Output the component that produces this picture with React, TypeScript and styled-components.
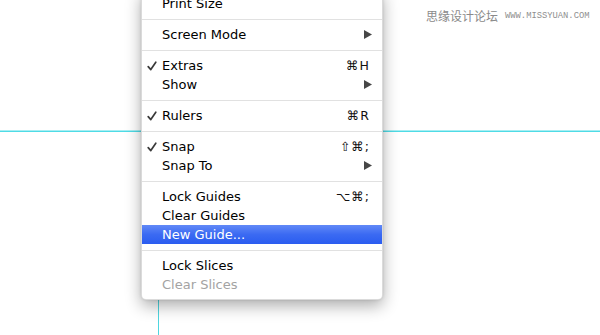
import React from "react";
import styled, { createGlobalStyle } from "styled-components";

const Global = createGlobalStyle`
  html, body { margin: 0; padding: 0; background: #fff; }
  body { font-family: "DejaVu Sans", "Noto Sans", sans-serif; }
`;

const Canvas = styled.div`
  position: relative;
  width: 600px;
  height: 335px;
  overflow: hidden;
  background: #fff;
`;

const HGuide = styled.div`
  position: absolute;
  left: 0;
  right: 0;
  top: 130px;
  height: 2px;
  background: linear-gradient(to bottom, #a8eef2 0%, #a8eef2 50%, #4fdbe6 50%, #4fdbe6 100%);
`;

const VGuide = styled.div`
  position: absolute;
  top: 0;
  bottom: 0;
  left: 158px;
  width: 0;
  border-left: 1px solid #4fd6e0;
`;

const Watermark = styled.div`
  position: absolute;
  top: 9px;
  left: 426px;
  display: flex;
  align-items: center;
  gap: 7px;
  color: #8a8a8a;
`;

const WmCn = styled.span`
  font-family: "Noto Sans CJK SC", sans-serif;
  font-size: 12px;
  line-height: 14px;
`;

const WmEn = styled.span`
  font-family: "Liberation Mono", monospace;
  font-size: 8.8px;
  line-height: 14px;
  color: #8f8f8f;
`;

const Menu = styled.div`
  position: absolute;
  left: 141px;
  top: -10px;
  width: 242px;
  box-sizing: border-box;
  padding: 4px 0 5px;
  background: #fff;
  border: 1px solid rgba(0, 0, 0, 0.14);
  border-top: none;
  border-radius: 0 0 5px 5px;
  box-shadow: 0 6px 16px rgba(0, 0, 0, 0.32), 0 0 3px rgba(0, 0, 0, 0.12);
  display: flex;
  flex-direction: column;
`;

const Row = styled.div<{ $active?: boolean; $disabled?: boolean }>`
  height: 19px;
  display: grid;
  grid-template-columns: 20px 1fr auto;
  align-items: center;
  padding: 0 12px 0 0;
  font-size: 13px;
  line-height: 19px;
  color: ${(p) => (p.$active ? "#fff" : p.$disabled ? "#a3a3a3" : "#000")};
  background: ${(p) =>
    p.$active ? "linear-gradient(to bottom, #6189f7 0%, #3b6af2 50%, #2a5cf0 100%)" : "transparent"};
`;

const CheckCell = styled.span`
  display: flex;
  align-items: center;
  padding-left: 5px;
  height: 19px;
`;

const CheckIcon = styled.svg`
  width: 10px;
  height: 10px;
  fill: none;
  stroke: #3a3a3a;
  stroke-width: 1.7;
  stroke-linecap: round;
  stroke-linejoin: round;
`;

const Label = styled.span`
  white-space: nowrap;
`;

const Shortcut = styled.span`
  font-size: 12.5px;
  letter-spacing: 1px;
  color: #111;
  text-align: right;
`;

const Arrow = styled.svg`
  width: 8px;
  height: 9px;
  margin-right: -2px;
  fill: #474747;
`;

const Sep = styled.div`
  height: 12px;
  display: flex;
  align-items: center;
  &::after {
    content: "";
    flex: 1;
    height: 1px;
    background: #e1e1e1;
  }
`;

type Item =
  | { sep: true }
  | {
      sep?: false;
      label: string;
      checked?: boolean;
      shortcut?: string;
      submenu?: boolean;
      active?: boolean;
      disabled?: boolean;
    };

const items: Item[] = [
  { label: "Print Size" },
  { sep: true },
  { label: "Screen Mode", submenu: true },
  { sep: true },
  { label: "Extras", checked: true, shortcut: "⌘H" },
  { label: "Show", submenu: true },
  { sep: true },
  { label: "Rulers", checked: true, shortcut: "⌘R" },
  { sep: true },
  { label: "Snap", checked: true, shortcut: "⇧⌘;" },
  { label: "Snap To", submenu: true },
  { sep: true },
  { label: "Lock Guides", shortcut: "⌥⌘;" },
  { label: "Clear Guides" },
  { label: "New Guide...", active: true },
  { sep: true },
  { label: "Lock Slices" },
  { label: "Clear Slices", disabled: true },
];

export default function App() {
  return (
    <Canvas>
      <Global />
      <HGuide />
      <VGuide />
      <Watermark>
        <WmCn>思缘设计论坛</WmCn>
        <WmEn>WWW.MISSYUAN.COM</WmEn>
      </Watermark>
      <Menu>
        {items.map((it, i) =>
          it.sep ? (
            <Sep key={i} />
          ) : (
            <Row key={i} $active={it.active} $disabled={it.disabled}>
              <CheckCell>
                {it.checked && (
                  <CheckIcon viewBox="0 0 10 10">
                    <path d="M1.2 5.6 L3.8 8.6 L8.8 1.2" />
                  </CheckIcon>
                )}
              </CheckCell>
              <Label>{it.label}</Label>
              {it.shortcut ? (
                <Shortcut>{it.shortcut}</Shortcut>
              ) : it.submenu ? (
                <Arrow viewBox="0 0 8 9">
                  <path d="M0 0 L8 4.5 L0 9 Z" />
                </Arrow>
              ) : (
                <span />
              )}
            </Row>
          )
        )}
      </Menu>
    </Canvas>
  );
}
